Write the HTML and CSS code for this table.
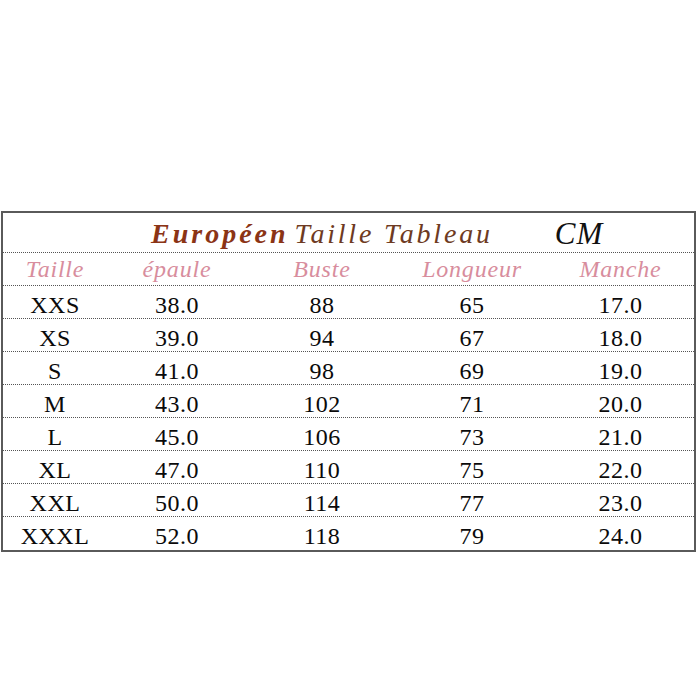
FILE: index.html
```html
<!DOCTYPE html>
<html lang="fr">
<head>
<meta charset="utf-8">
<title>Européen Taille Tableau</title>
<link rel="stylesheet" href="styles.css">
</head>
<body>
<div class="page">
  <div class="chart">
    <div class="title-row">
      <span class="t-bold">Européen</span>
      <span class="t-reg">Taille Tableau</span>
      <span class="t-cm">CM</span>
    </div>
    <div class="row head">
      <span>Taille</span><span>épaule</span><span>Buste</span><span>Longueur</span><span>Manche</span>
    </div>
    <div class="row"><span>XXS</span><span>38.0</span><span>88</span><span>65</span><span>17.0</span></div>
    <div class="row"><span>XS</span><span>39.0</span><span>94</span><span>67</span><span>18.0</span></div>
    <div class="row"><span>S</span><span>41.0</span><span>98</span><span>69</span><span>19.0</span></div>
    <div class="row"><span>M</span><span>43.0</span><span>102</span><span>71</span><span>20.0</span></div>
    <div class="row"><span>L</span><span>45.0</span><span>106</span><span>73</span><span>21.0</span></div>
    <div class="row"><span>XL</span><span>47.0</span><span>110</span><span>75</span><span>22.0</span></div>
    <div class="row"><span>XXL</span><span>50.0</span><span>114</span><span>77</span><span>23.0</span></div>
    <div class="row last"><span>XXXL</span><span>52.0</span><span>118</span><span>79</span><span>24.0</span></div>
  </div>
</div>
</body>
</html>
```

FILE: styles.css
```css
html, body {
  margin: 0;
  padding: 0;
  background: #ffffff;
}
.page {
  width: 700px;
  height: 700px;
  padding-top: 211px;
  padding-left: 1px;
  box-sizing: border-box;
  font-family: "Liberation Serif", "Times New Roman", serif;
}
.chart {
  width: 695px;
  box-sizing: border-box;
  border: 2px solid #5a5a5a;
}
.title-row {
  height: 40px;
  display: flex;
  align-items: flex-end;
  padding-left: 148px;
  padding-bottom: 2px;
  box-sizing: border-box;
  border-bottom: 1px dotted #555;
  font-size: 28px;
  line-height: 32px;
  font-style: italic;
}
.t-bold {
  font-weight: bold;
  color: #8b3416;
  letter-spacing: 3px;
}
.t-reg {
  margin-left: 6px;
  color: #6e3a22;
  letter-spacing: 2.8px;
}
.t-cm {
  margin-left: 62px;
  color: #111;
  font-size: 31px;
  letter-spacing: 1px;
}
.row {
  display: grid;
  grid-template-columns: 104px 140px 150px 150px 1fr;
  height: 33px;
  box-sizing: border-box;
  border-bottom: 1px dotted #555;
  align-items: center;
  font-size: 24px;
  line-height: 33px;
  color: #0a0a0a;
  letter-spacing: 0.5px;
}
.row span {
  text-align: center;
  padding-top: 3px;
}
.row.head {
  font-style: italic;
  color: #d88d9d;
  letter-spacing: 0.8px;
}
.row.head span {
  padding-top: 0;
}
.row.last {
  border-bottom: none;
}
```
